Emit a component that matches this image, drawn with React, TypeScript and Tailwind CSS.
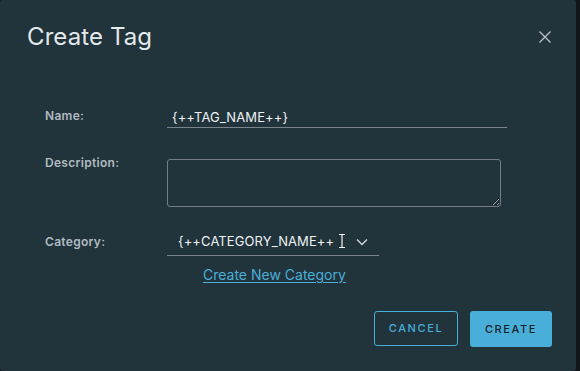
import React from 'react';

const font = { fontFamily: 'Inter, "Noto Sans", sans-serif' };

const App: React.FC = () => {
  return (
    <div className="w-[580px] h-[371px] flex bg-[#0f1518]" style={font}>
      <div className="w-[576px] h-full bg-[#21333b] rounded-[3px] flex flex-col">
        {/* header */}
        <div className="flex items-start justify-between pl-[27px] pr-[27px] pt-[21px]">
          <h1 className="text-[24px] leading-[32px] font-normal text-[#e3e9ec] tracking-[0.1px]">Create Tag</h1>
          <button className="mt-[9px] mr-[-3px] text-[#b8c4ca]">
            <svg width="14" height="14" viewBox="0 0 14 14" fill="none" stroke="currentColor" strokeWidth="1.3">
              <path d="M1.5 1.5 L12.5 12.5 M12.5 1.5 L1.5 12.5" />
            </svg>
          </button>
        </div>

        {/* form */}
        <div className="flex flex-col pl-[45px] mt-[56px]">
          <div className="flex items-start">
            <label className="w-[122px] text-[12px] leading-[18px] font-semibold tracking-[0.3px] text-[#b0bbc1] mt-[-2px]">Name:</label>
            <div className="w-[340px] border-b border-[#7b868c] pl-[5px] pb-[2px]">
              <span className="text-[13px] leading-[16px] text-[#eef2f4] block tracking-[0.1px]">{'{++TAG_NAME++}'}</span>
            </div>
          </div>

          <div className="flex items-start mt-[31px]">
            <label className="w-[122px] text-[12px] leading-[18px] font-semibold tracking-[0.3px] text-[#b0bbc1] mt-[-5px]">Description:</label>
            <textarea className="w-[334px] h-[48px] bg-transparent border border-[#737f85] rounded-[3px] text-[13px] text-[#eef2f4] outline-none" />
          </div>

          <div className="flex items-start mt-[25px]">
            <label className="w-[122px] text-[12px] leading-[18px] font-semibold tracking-[0.3px] text-[#b0bbc1] mt-[1px]">Category:</label>
            <div className="w-[212px] border-b border-[#7b868c] flex items-center pl-[11px] pb-[6px] pt-[1px]">
              <span className="text-[13px] leading-[16px] text-[#eef2f4] whitespace-nowrap tracking-[0.1px]">{'{++CATEGORY_NAME++'}</span>
              <svg className="ml-[4px] text-[#f3f6f7]" width="8" height="16" viewBox="0 0 8 16" fill="none" stroke="currentColor" strokeWidth="1.2">
                <path d="M1 1.5 H7 M4 1.5 V14.5 M1 14.5 H7" />
              </svg>
              <svg className="ml-[10px] mt-[2px] text-[#cfd8dc]" width="12" height="8" viewBox="0 0 12 8" fill="none" stroke="currentColor" strokeWidth="1.4">
                <path d="M1 1.5 L6 6.5 L11 1.5" />
              </svg>
            </div>
          </div>

          <div className="pl-[158px] mt-[6px]">
            <a href="#" className="text-[14px] leading-[18px] text-[#49afd9] underline underline-offset-[2px]">Create New Category</a>
          </div>
        </div>

        {/* footer */}
        <div className="flex justify-end items-start gap-[12px] pr-[24px] mt-[25px]">
          <button className="w-[84px] h-[35px] border border-[#49afd9] rounded-[3px] text-[11px] font-medium tracking-[1.6px] text-[#49afd9]">CANCEL</button>
          <button className="w-[82px] h-[36px] bg-[#49afd9] rounded-[3px] text-[11px] font-medium tracking-[1.6px] text-[#13222a]">CREATE</button>
        </div>
      </div>
    </div>
  );
};

export default App;
